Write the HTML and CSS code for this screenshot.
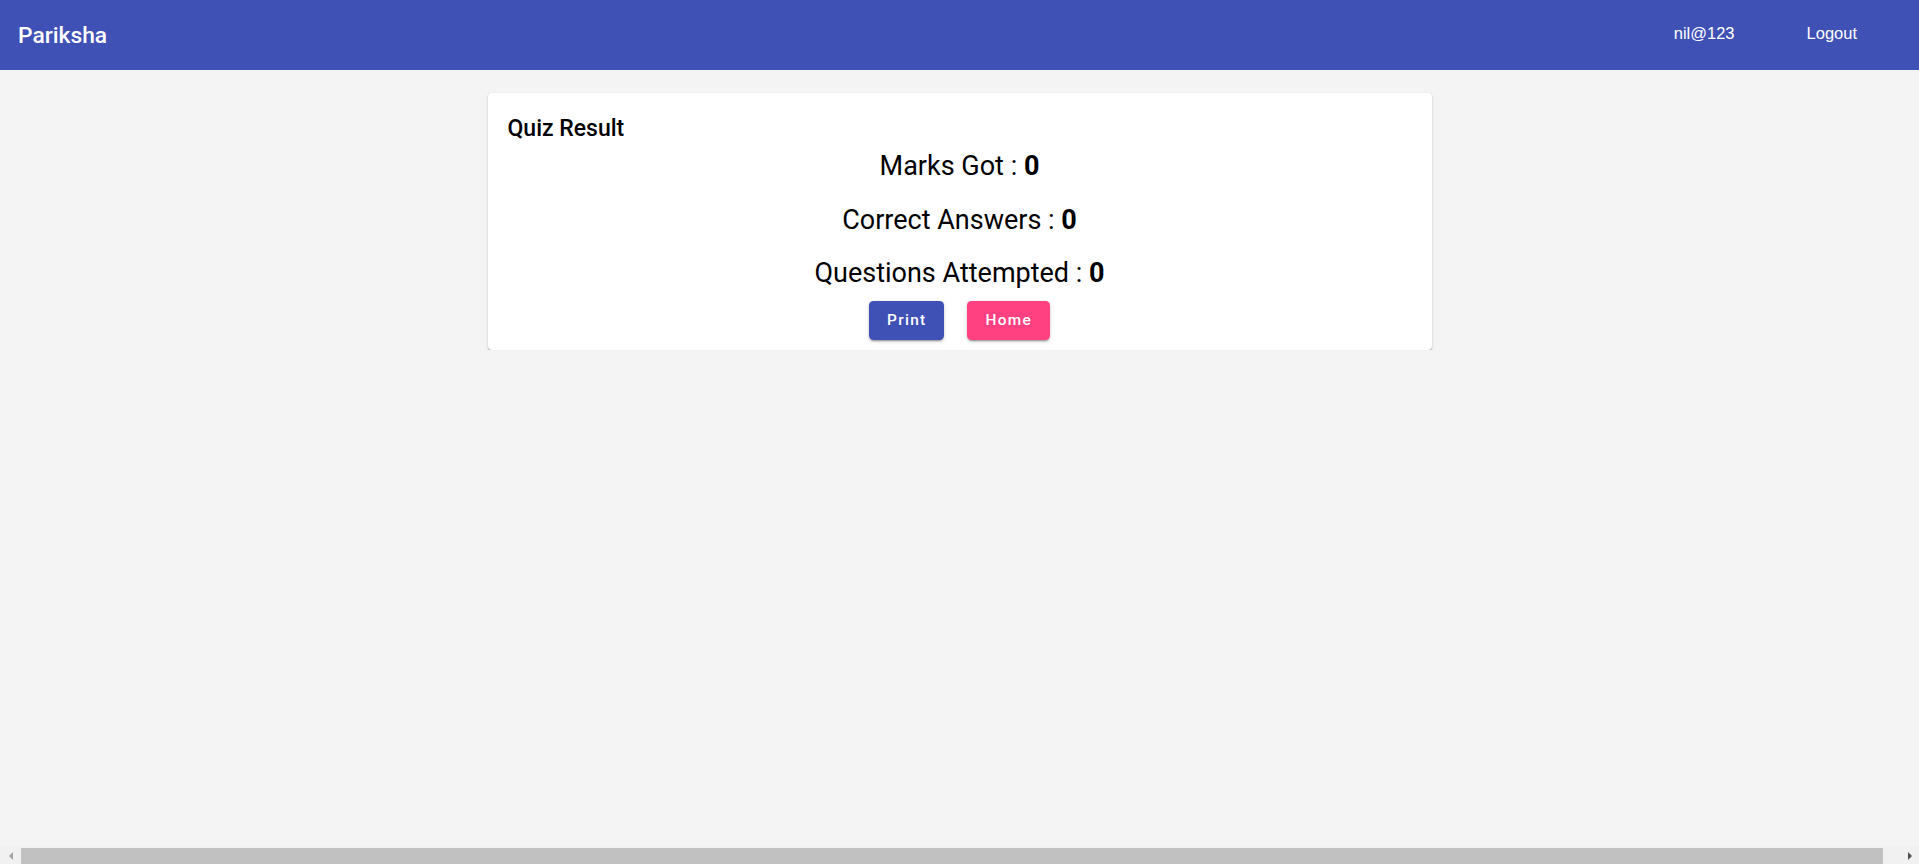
FILE: index.html
```html
<!DOCTYPE html>
<html lang="en">
<head>
<meta charset="utf-8">
<title>Pariksha</title>
<link rel="stylesheet" href="styles.css">
</head>
<body>
<header class="toolbar">
  <span class="brand">Pariksha</span>
  <span class="spacer"></span>
  <nav class="nav">
    <a class="nav-btn" href="#">nil@123</a>
    <a class="nav-btn" href="#">Logout</a>
  </nav>
</header>
<main class="content">
  <section class="card">
    <h2 class="card-title">Quiz Result</h2>
    <div class="result">
      <p class="result-line">Marks Got : <b>0</b></p>
      <p class="result-line">Correct Answers : <b>0</b></p>
      <p class="result-line">Questions Attempted : <b>0</b></p>
    </div>
    <div class="actions">
      <button class="btn btn-primary" type="button">Print</button>
      <button class="btn btn-accent" type="button">Home</button>
    </div>
  </section>
</main>
<div class="hscroll" aria-hidden="true">
  <span class="sb-btn sb-left"><span class="tri tri-left"></span></span>
  <span class="sb-thumb"></span>
  <span class="sb-btn sb-right"><span class="tri tri-right"></span></span>
</div>
</body>
</html>
```
FILE: styles.css
```css
html, body {
  margin: 0;
  padding: 0;
}
body {
  background: #f4f4f4;
  font-family: Roboto, "Helvetica Neue", sans-serif;
  color: #000;
}
.toolbar {
  display: flex;
  align-items: center;
  height: 70px;
  padding: 0 18px;
  box-sizing: border-box;
  background: #3f51b5;
  color: #fff;
}
.brand {
  font-family: Roboto, sans-serif;
  font-weight: 500;
  font-size: 22.8px;
}
.spacer {
  flex: 1 1 auto;
}
.nav {
  display: flex;
  align-items: center;
  gap: 36px;
  margin-right: 26px;
  margin-bottom: 4px;
}
.nav-btn {
  font-family: "Liberation Sans", Arial, sans-serif;
  font-size: 16.5px;
  color: #fff;
  text-decoration: none;
  padding: 0 18px;
  line-height: 39px;
}
.content {
  padding-top: 23px;
}
.card {
  width: 944px;
  margin: 0 auto;
  box-sizing: border-box;
  background: #fff;
  border-radius: 4px;
  padding: 23px 20px 10px;
  box-shadow: 0 1px 1px 0 rgba(0,0,0,.3), 0 1px 3px 0 rgba(0,0,0,.12);
}
.card-title {
  margin: 0;
  font-size: 23px;
  font-weight: 500;
  line-height: 26px;
}
.result {
  display: flex;
  flex-direction: column;
  align-items: center;
  gap: 21.5px;
  margin-top: 8px;
}
.result-line {
  margin: 0;
  font-size: 27px;
  line-height: 32px;
  font-weight: 400;
}
.result-line b {
  font-weight: 700;
}
.actions {
  display: flex;
  justify-content: center;
  gap: 23px;
  margin-top: 11.5px;
}
.btn {
  height: 39px;
  padding: 0 18px;
  border: none;
  border-radius: 4.4px;
  font-family: Roboto, sans-serif;
  font-size: 15.4px;
  font-weight: 500;
  letter-spacing: 1.3px;
  color: #fff;
  box-shadow: 0 3px 1px -2px rgba(0,0,0,.2), 0 2px 2px 0 rgba(0,0,0,.14), 0 1px 5px 0 rgba(0,0,0,.12);
  cursor: pointer;
}
.btn-primary {
  background: #3f51b5;
}
.btn-accent {
  background: #ff4081;
}
.hscroll {
  position: fixed;
  left: 0;
  right: 0;
  bottom: 0;
  height: 18px;
  display: flex;
  background: #f1f1f1;
}
.sb-btn {
  display: flex;
  align-items: center;
  justify-content: center;
}
.sb-left {
  width: 21px;
}
.sb-right {
  width: 36px;
  justify-content: flex-end;
  padding-right: 7px;
  box-sizing: border-box;
}
.sb-thumb {
  flex: 1 1 auto;
  margin-top: 2px;
  background: #c1c1c1;
}
.tri {
  width: 0;
  height: 0;
  border-top: 4px solid transparent;
  border-bottom: 4px solid transparent;
  margin-top: 2px;
}
.tri-left {
  border-right: 4px solid #a3a3a3;
}
.tri-right {
  border-left: 4px solid #505050;
}
```
